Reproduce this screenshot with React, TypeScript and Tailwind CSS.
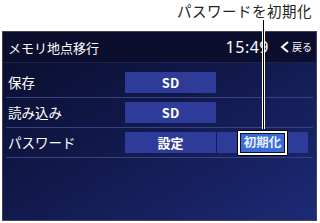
import React from 'react';

const font = { fontFamily: '"Noto Sans CJK JP", "Noto Sans", sans-serif' };

const Row: React.FC<{ label: string; children: React.ReactNode }> = ({ label, children }) => (
  <div className="flex items-center h-[30px] border-b border-[#3a4380]">
    <div className="w-[119px] pl-[2px] text-[13.5px] text-white leading-none">{label}</div>
    {children}
  </div>
);

const Btn: React.FC<{ label: string; className?: string }> = ({ label, className = '' }) => (
  <div
    className={`w-[91px] h-[21px] flex items-center justify-center bg-[#2e3b98] text-white text-[13px] font-bold ${className}`}
  >
    {label}
  </div>
);

const App: React.FC = () => {
  return (
    <div className="relative w-[320px] h-[223px] bg-white overflow-hidden" style={font}>
      {/* callout label */}
      <div className="h-[31px] flex justify-end pr-[8px] pt-[1px]">
        <span className="text-[14.5px] text-[#222] leading-[20px] tracking-[0.5px]">パスワードを初期化</span>
      </div>

      {/* screen */}
      <div className="ml-[2px] mr-[3px] h-[190px] border border-[#444] bg-gradient-to-br from-[#0a0d2c] via-[#121a4e] to-[#1d2a76] flex flex-col">
        <div className="h-[31px] flex items-center pl-[5px] pr-[4px] bg-[#0b0e2d] border-b border-[#1c2350]">
          <span className="text-[13px] text-white leading-none">メモリ地点移行</span>
          <span className="ml-auto text-[16px] text-white tracking-[0.5px] leading-none" style={{ fontFamily: '"Noto Sans", sans-serif' }}>
            15:49
          </span>
          <span className="ml-[11px] flex items-center text-white leading-none">
            <svg width="10" height="12" viewBox="0 0 10 12" className="mr-[2px]">
              <path d="M8 1 L2 6 L8 11" fill="none" stroke="white" strokeWidth="2" />
            </svg>
            <span className="text-[10px]">戻る</span>
          </span>
        </div>

        <div className="pt-[5px] px-[3px]">
          <Row label="保存">
            <Btn label="SD" />
          </Row>
          <Row label="読み込み">
            <Btn label="SD" />
          </Row>
          <Row label="パスワード">
            <Btn label="設定" />
            <div className="ml-[1px] w-[91px] h-[21px] bg-[#2e3b98] flex items-center justify-center">
              <div className="h-[24px] px-[4px] flex items-center bg-[#3a6ad8] border-2 border-white outline outline-1 outline-black shadow-[inset_0_0_0_1px_#111] text-[12.5px] font-bold text-[#e8f0ff]">
                初期化
              </div>
            </div>
          </Row>
        </div>
      </div>

      {/* callout line */}
      <div className="absolute left-[262px] top-[20px] w-[3px] h-[109px] bg-black border-x border-white" />
    </div>
  );
};

export default App;
